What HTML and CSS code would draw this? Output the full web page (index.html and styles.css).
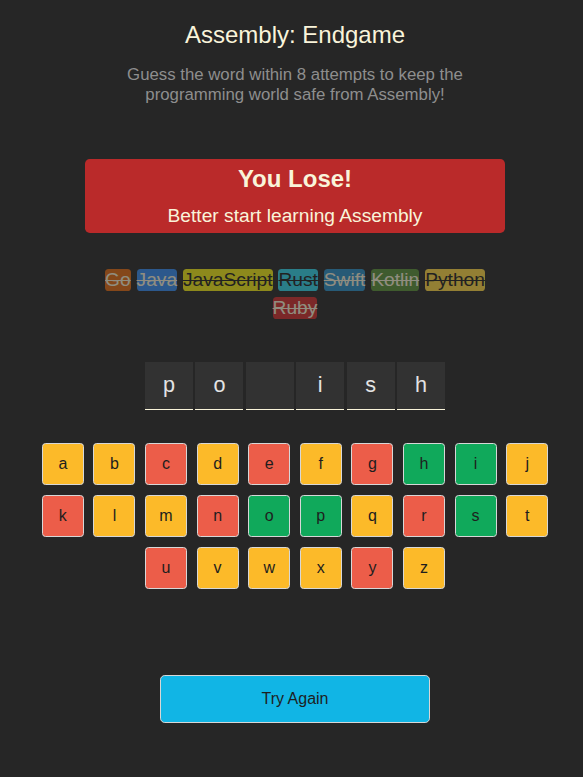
FILE: index.html
```html
<!DOCTYPE html>
<html lang="en">
<head>
<meta charset="utf-8">
<title>Assembly: Endgame</title>
<link rel="stylesheet" href="styles.css">
</head>
<body>
<main class="game">
  <header class="intro">
    <h1 class="title">Assembly: Endgame</h1>
    <p class="subtitle">Guess the word within 8 attempts to keep the programming world safe from Assembly!</p>
  </header>

  <section class="status status-lost">
    <h2 class="status-title">You Lose!</h2>
    <p class="status-text">Better start learning Assembly</p>
  </section>

  <section class="chips">
    <span class="chip lost chip-go">Go</span>
    <span class="chip lost chip-java">Java</span>
    <span class="chip lost chip-js">JavaScript</span>
    <span class="chip lost chip-rust">Rust</span>
    <span class="chip lost chip-swift">Swift</span>
    <span class="chip lost chip-kotlin">Kotlin</span>
    <span class="chip lost chip-python">Python</span>
    <span class="chip lost chip-ruby">Ruby</span>
  </section>

  <section class="word">
    <span class="letter">p</span>
    <span class="letter">o</span>
    <span class="letter"></span>
    <span class="letter">i</span>
    <span class="letter">s</span>
    <span class="letter">h</span>
  </section>

  <section class="keyboard">
    <button class="key">a</button>
    <button class="key">b</button>
    <button class="key wrong">c</button>
    <button class="key">d</button>
    <button class="key wrong">e</button>
    <button class="key">f</button>
    <button class="key wrong">g</button>
    <button class="key correct">h</button>
    <button class="key correct">i</button>
    <button class="key">j</button>
    <button class="key wrong">k</button>
    <button class="key">l</button>
    <button class="key">m</button>
    <button class="key wrong">n</button>
    <button class="key correct">o</button>
    <button class="key correct">p</button>
    <button class="key">q</button>
    <button class="key wrong">r</button>
    <button class="key correct">s</button>
    <button class="key">t</button>
    <button class="key wrong">u</button>
    <button class="key">v</button>
    <button class="key">w</button>
    <button class="key">x</button>
    <button class="key wrong">y</button>
    <button class="key">z</button>
  </section>

  <button class="new-game">Try Again</button>
</main>
</body>
</html>
```

FILE: styles.css
```css
* {
  box-sizing: border-box;
}

html, body {
  margin: 0;
  padding: 0;
  background: #262626;
}

body {
  font-family: "Liberation Sans", Arial, sans-serif;
  color: #D9D9D9;
}

.game {
  display: flex;
  flex-direction: column;
  align-items: center;
  padding: 21px 0 40px 7px;
}

.intro {
  display: flex;
  flex-direction: column;
  align-items: center;
  text-align: center;
}

.title {
  margin: 0;
  font-size: 24px;
  font-weight: 400;
  line-height: 27.6px;
  color: #F9F4DA;
}

.subtitle {
  margin: 16.8px 0 0;
  max-width: 420px;
  font-size: 16.8px;
  line-height: 19.3px;
  color: #8E8E8E;
}

.status {
  margin-top: 55px;
  width: 420px;
  min-height: 72px;
  border-radius: 4.8px;
  display: flex;
  flex-direction: column;
  align-items: center;
  justify-content: center;
  color: #F9F4DA;
}

.status-lost {
  background: #BA2A2A;
}

.status-title {
  margin: 6px;
  font-size: 24px;
  line-height: 27.6px;
  font-weight: 700;
}

.status-text {
  margin: 6px;
  font-size: 19.2px;
  line-height: 22px;
}

.chips {
  margin-top: 36.4px;
  max-width: 420px;
  display: flex;
  flex-wrap: wrap;
  justify-content: center;
  column-gap: 5.9px;
  row-gap: 6px;
}

.chip {
  font-size: 19.2px;
  line-height: 22px;
  border-radius: 3.6px;
  color: #F9F4DA;
}

.chip.lost {
  opacity: 0.5;
  text-decoration: line-through;
  text-decoration-thickness: 1px;
}

.chip-go { background: #E2680F; }
.chip-java { background: #328AF1; }
.chip-js { background: #F4EB13; color: #1E1E1E; }
.chip-rust { background: #2ED3E9; color: #1E1E1E; }
.chip-swift { background: #298EC6; }
.chip-kotlin { background: #599137; }
.chip-python { background: #FFD742; color: #1E1E1E; }
.chip-ruby { background: #D02B2B; }

.word {
  margin-top: 43px;
  display: flex;
  gap: 2.4px;
}

.letter {
  width: 48px;
  height: 48px;
  background: #323232;
  border-bottom: 1.2px solid #F9F4DA;
  display: flex;
  align-items: center;
  justify-content: center;
  font-size: 21.6px;
  color: #E3E3E3;
}

.keyboard {
  margin-top: 33px;
  max-width: 540px;
  display: flex;
  flex-wrap: wrap;
  justify-content: center;
  column-gap: 9.6px;
  row-gap: 10px;
}

.key {
  width: 42px;
  height: 42px;
  padding: 0;
  background: #FCBA29;
  border: 1.2px solid #D7D7D7;
  border-radius: 3.6px;
  font-family: "Liberation Sans", Arial, sans-serif;
  font-size: 16px;
  color: #1E1E1E;
}

.key.correct {
  background: #10A95B;
}

.key.wrong {
  background: #EC5D49;
}

.new-game {
  margin-top: 86px;
  width: 270px;
  height: 48px;
  background: #11B5E5;
  border: 1.2px solid #D7D7D7;
  border-radius: 4.8px;
  font-family: "Liberation Sans", Arial, sans-serif;
  font-size: 16px;
  color: #1E1E1E;
}
```
